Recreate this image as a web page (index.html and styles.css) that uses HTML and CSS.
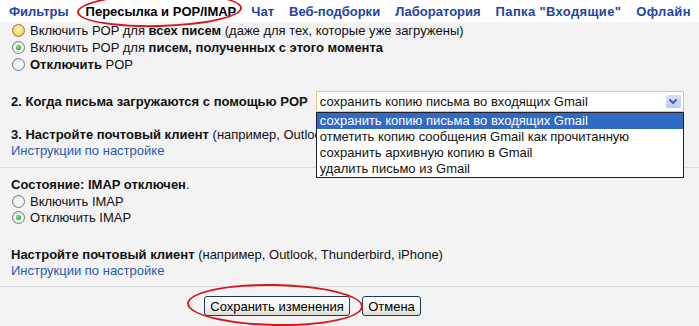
FILE: index.html
```html
<!DOCTYPE html>
<html lang="ru">
<head>
<meta charset="utf-8">
<link rel="stylesheet" href="styles.css">
</head>
<body>
<div class="page">
  <nav class="tabs">
    <a class="tab">Фильтры</a>
    <span class="tab tab-active">Пересылка и POP/IMAP<span class="mark mark-tab"></span></span>
    <a class="tab">Чат</a>
    <a class="tab">Веб-подборки</a>
    <a class="tab">Лаборатория</a>
    <a class="tab tab-wide">Папка "Входящие"</a>
    <a class="tab tab-wide">Офлайн</a>
  </nav>

  <section class="block block-pop">
    <label class="opt"><span class="radio radio-hover"></span><span>Включить POP для <b>всех писем</b> (даже для тех, которые уже загружены)</span></label>
    <label class="opt"><span class="radio radio-on"></span><span>Включить POP для <b>писем, полученных с этого момента</b></span></label>
    <label class="opt"><span class="radio"></span><span><b>Отключить</b> POP</span></label>

    <div class="when">
      <b>2. Когда письма загружаются с помощью POP</b>
      <div class="select">
        <span class="select-value">сохранить копию письма во входящих Gmail</span>
        <span class="select-btn"><svg width="10" height="7" viewBox="0 0 10 7"><path d="M1.5 1.5 L5 5 L8.5 1.5" fill="none" stroke="#4d6185" stroke-width="2"/></svg></span>
        <ul class="list">
          <li class="list-sel">сохранить копию письма во входящих Gmail</li>
          <li>отметить копию сообщения Gmail как прочитанную</li>
          <li>сохранить архивную копию в Gmail</li>
          <li>удалить письмо из Gmail</li>
        </ul>
      </div>
    </div>

    <p class="line line-3"><b>3. Настройте почтовый клиент</b> (например, Outlook, Thunderbird, iPhone)</p>
    <a class="link">Инструкции по настройке</a>
  </section>

  <section class="block block-imap">
    <p class="line"><b>Состояние: IMAP отключен</b>.</p>
    <label class="opt opt-imap"><span class="radio"></span><span>Включить IMAP</span></label>
    <label class="opt opt-imap"><span class="radio radio-on"></span><span>Отключить IMAP</span></label>
    <p class="line line-client"><b>Настройте почтовый клиент</b> (например, Outlook, Thunderbird, iPhone)</p>
    <a class="link">Инструкции по настройке</a>
  </section>

  <div class="actions">
    <span class="btn-wrap"><button class="btn btn-save">Сохранить изменения</button><span class="mark mark-save"></span></span>
    <button class="btn btn-cancel">Отмена</button>
  </div>
</div>
</body>
</html>
```

FILE: styles.css
```css
html, body {
  margin: 0;
  padding: 0;
  background: #f3f3f3;
}
body {
  font-family: "Liberation Sans", Arial, sans-serif;
  font-size: 13px;
  color: #111;
  width: 699px;
  height: 326px;
  overflow: hidden;
}
.page {
  position: relative;
}
.tabs {
  display: flex;
  gap: 15px;
  height: 22px;
  align-items: center;
  padding-left: 9px;
  background: #fff;
  font-weight: bold;
  white-space: nowrap;
}
.tab {
  color: #2244a0;
  position: relative;
}
.tab-active {
  color: #000;
  margin-left: 2px;
}
.tab-wide {
  letter-spacing: 0.35px;
}
.mark {
  position: absolute;
  border: 2px solid #d5161d;
  border-radius: 50%;
  pointer-events: none;
}
.mark-tab {
  left: -9px;
  right: -5px;
  top: -11px;
  bottom: -8px;
  transform: rotate(-1.5deg);
}
.block {
  padding-left: 11px;
}
.block-pop {
  padding-bottom: 8px;
  border-bottom: 1px solid #dcdcdc;
}
.opt {
  display: flex;
  align-items: center;
  height: 17px;
  padding-left: 1px;
  white-space: nowrap;
}
.opt-imap {
  height: 16px;
}
.radio {
  width: 11px;
  height: 11px;
  border: 1px solid #6b7f95;
  border-radius: 50%;
  background: radial-gradient(circle at 60% 65%, #ffffff 0, #f4f4f0 40%, #d8d8d0 100%);
  margin-right: 5px;
  flex: none;
  position: relative;
}
.radio-hover {
  background: radial-gradient(circle at 50% 40%, #fff6c8 0, #f5d66a 60%, #d8a83a 100%);
  border-color: #8a7a50;
}
.radio-on::after {
  content: "";
  position: absolute;
  left: 3px;
  top: 3px;
  width: 5px;
  height: 5px;
  border-radius: 50%;
  background: radial-gradient(circle at 40% 40%, #8ff08f 0, #21a121 70%);
}
.when {
  display: flex;
  align-items: center;
  margin-top: 18px;
  height: 21px;
  white-space: nowrap;
}
.select {
  position: relative;
  margin-left: 8px;
  width: 366px;
  height: 19px;
  border: 1px solid #e5c28a;
  background: #fff;
  display: flex;
  align-items: center;
}
.select-value {
  flex: 1;
  padding-left: 3px;
}
.select-btn {
  width: 15px;
  height: 13px;
  margin-right: 2px;
  background: linear-gradient(#d4e1fb, #b9cdf5);
  border-radius: 2px;
  display: flex;
  align-items: center;
  justify-content: center;
}
.list {
  position: absolute;
  left: -1px;
  top: 20px;
  width: 366px;
  margin: 0;
  padding: 0;
  list-style: none;
  background: #fff;
  border: 1px solid #222;
  z-index: 2;
}
.list li {
  height: 16px;
  line-height: 16px;
  padding-left: 3px;
}
.list .list-sel {
  background: #316ac5;
  color: #fff;
}
.line {
  margin: 0;
  height: 16px;
  line-height: 16px;
  white-space: nowrap;
}
.line-3 {
  margin-top: 15px;
}
.link {
  display: block;
  height: 16px;
  line-height: 16px;
  color: #2a5aa8;
}
.block-imap {
  padding-top: 9px;
  padding-bottom: 7px;
  border-bottom: 1px solid #dcdcdc;
}
.line-client {
  margin-top: 22px;
}
.actions {
  display: flex;
  gap: 12px;
  padding-top: 9px;
  padding-left: 204px;
  align-items: center;
}
.btn-wrap {
  position: relative;
  display: flex;
}
.btn {
  font-family: "Liberation Sans", Arial, sans-serif;
  font-size: 13px;
  color: #000;
  height: 20px;
  padding: 0;
  white-space: nowrap;
  border: 1px solid #1c3a5e;
  border-radius: 3px;
  background: linear-gradient(#ffffff, #f0f0ea 70%, #dcdcd2);
}
.btn-save {
  width: 146px;
}
.btn-cancel {
  width: 59px;
}
.mark-save {
  left: -17px;
  right: -13px;
  top: -12px;
  bottom: -10px;
  transform: rotate(1deg);
}
```
